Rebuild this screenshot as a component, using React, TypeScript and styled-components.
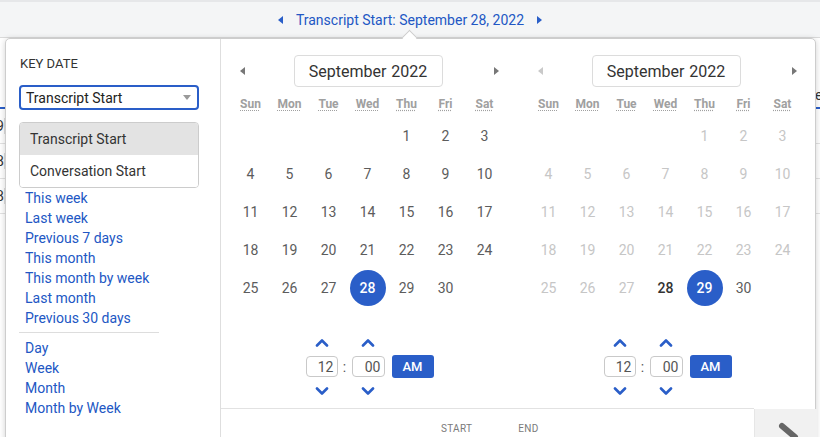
import React from "react";
import styled, { createGlobalStyle } from "styled-components";

const BLUE = "#2a5ec8";
const LINK = "#2257c4";

const Global = createGlobalStyle`
  html, body { margin: 0; padding: 0; background: #fff; }
  body { font-family: Roboto, "Liberation Sans", Arial, sans-serif; }
  * { box-sizing: border-box; }
`;

const Page = styled.div`
  position: relative;
  width: 820px;
  height: 437px;
  overflow: hidden;
  background: #fff;
`;

const TopBar = styled.div`
  height: 38px;
  background: #f4f5f6;
  border-top: 2px solid #e6e7e9;
  border-bottom: 1px solid #dadada;
  display: flex;
  align-items: center;
  justify-content: center;
  gap: 11px;
`;

const Tri = styled.span<{ $dir: "left" | "right"; $color: string }>`
  display: inline-block;
  width: 0;
  height: 0;
  border-top: 4px solid transparent;
  border-bottom: 4px solid transparent;
  ${(p) =>
    p.$dir === "left"
      ? `border-right: 5px solid ${p.$color};`
      : `border-left: 5px solid ${p.$color};`}
`;

const TopTitle = styled.span`
  font-size: 14px;
  color: ${LINK};
  padding: 0 2px;
`;

/* background page content, mostly hidden by the popup */
const Backdrop = styled.div`
  display: flex;
  flex-direction: column;
`;

const BackHead = styled.div`
  height: 71px;
  border-bottom: 2px solid ${BLUE};
  display: flex;
  justify-content: flex-end;
  align-items: flex-start;
  padding-top: 49px;
  font-size: 14px;
  color: #333;
`;

const BackHeadText = styled.span`
  width: 5px;
  overflow: hidden;
`;

const BackRow = styled.div<{ $dark?: boolean }>`
  height: 35px;
  border-bottom: 1px solid ${(p) => (p.$dark ? "#555" : "#e2e2e2")};
  display: flex;
  align-items: center;
  font-size: 14px;
  color: #333;
`;

const BackCell = styled.div`
  width: 5px;
  overflow: hidden;
  display: flex;
  justify-content: flex-end;
  white-space: nowrap;
  border-right: 1px solid #ddd;
`;

const Popup = styled.div`
  position: absolute;
  left: 5px;
  top: 38px;
  width: 811px;
  height: 430px;
  background: #fff;
  border: 1px solid #cdcdcd;
  border-radius: 5px;
  box-shadow: 0 1px 6px rgba(0, 0, 0, 0.18);
  display: flex;
`;

const Caret = styled.div`
  position: absolute;
  top: -7px;
  left: 398px;
  width: 11px;
  height: 11px;
  background: #fff;
  border-left: 1px solid #cdcdcd;
  border-top: 1px solid #cdcdcd;
  transform: rotate(45deg);
`;

const Sidebar = styled.div`
  width: 215px;
  flex: none;
  border-right: 1px solid #dedede;
  padding: 17px 0 0 13px;
  display: flex;
  flex-direction: column;
  align-items: flex-start;
`;

const Label = styled.div`
  font-size: 13px;
  line-height: 16px;
  color: #333;
  padding-left: 1px;
`;

const Select = styled.div`
  margin-top: 13px;
  width: 180px;
  height: 25px;
  border: 2px solid ${BLUE};
  border-radius: 4px;
  display: flex;
  align-items: center;
  justify-content: space-between;
  padding: 0 6px 0 5px;
  font-size: 14px;
  color: #222;
`;

const SelectCaret = styled.span`
  width: 0;
  height: 0;
  border-left: 4px solid transparent;
  border-right: 4px solid transparent;
  border-top: 5px solid #9a9a9a;
`;

const OptionList = styled.div`
  margin-top: 12px;
  width: 180px;
  border: 1px solid #cccccc;
  border-radius: 4px;
  overflow: hidden;
`;

const OptionItem = styled.div<{ $active?: boolean }>`
  height: 32px;
  line-height: 32px;
  padding-left: 10px;
  font-size: 14px;
  color: #333;
  background: ${(p) => (p.$active ? "#e3e3e3" : "#fff")};
`;

const LinkList = styled.div`
  display: flex;
  flex-direction: column;
  padding-left: 6px;
`;

const LinkItem = styled.a`
  font-size: 14px;
  line-height: 20px;
  color: ${LINK};
  text-decoration: none;
  cursor: pointer;
`;

const Divider = styled.div`
  width: 140px;
  height: 1px;
  background: #dddddd;
  margin: 4px 0 5px;
`;

const Main = styled.div`
  flex: 1;
  display: flex;
  flex-direction: column;
`;

const CalRow = styled.div`
  height: 369px;
  display: flex;
`;

const Calendar = styled.div`
  width: 298px;
  flex: none;
  display: flex;
  flex-direction: column;
`;

const CalHeader = styled.div`
  margin-top: 16px;
  display: grid;
  grid-template-columns: 42px 1fr 46px;
  align-items: center;
  justify-items: center;
`;

const MonthBox = styled.div`
  width: 149px;
  height: 32px;
  border: 1px solid #dcdcdc;
  border-radius: 4px;
  display: flex;
  align-items: center;
  justify-content: center;
  gap: 5px;
  font-size: 16px;
  color: #333;
`;

const Grid = styled.div`
  display: grid;
  grid-template-columns: repeat(7, 39px);
  padding-left: 10px;
`;

const DowRow = styled(Grid)`
  margin-top: 9px;
  margin-bottom: 5px;
`;

const Dow = styled.abbr`
  text-align: center;
  font-size: 12px;
  line-height: 16px;
  font-weight: 700;
  color: #a0a0a0;
  text-decoration: underline dotted #a0a0a0;
  text-underline-offset: 2px;
  justify-self: center;
`;

type DayState = "normal" | "disabled" | "emph" | "selected" | "empty";

const DayCell = styled.div<{ $state: DayState }>`
  height: 38px;
  display: flex;
  align-items: center;
  justify-content: center;
  font-size: 14px;
  color: ${(p) =>
    p.$state === "disabled" ? "#c6c6c6" : p.$state === "emph" ? "#333" : "#5c5c5c"};
  font-weight: ${(p) => (p.$state === "emph" ? 500 : 400)};
`;

const SelectedDay = styled.span`
  width: 36px;
  height: 36px;
  border-radius: 50%;
  background: ${BLUE};
  color: #fff;
  font-weight: 500;
  display: flex;
  align-items: center;
  justify-content: center;
`;

const TimePicker = styled.div`
  margin-top: 28px;
  display: flex;
  align-items: center;
  justify-content: center;
  padding-right: 1px;
`;

const TimeCol = styled.div`
  display: flex;
  flex-direction: column;
  align-items: center;
  gap: 7px;
`;

const Chevron = styled.button`
  width: 16px;
  height: 14px;
  padding: 0;
  border: 0;
  background: none;
  display: flex;
  align-items: center;
  justify-content: center;
  cursor: pointer;
`;

const TimeInput = styled.div<{ $w: number }>`
  width: ${(p) => p.$w}px;
  height: 21px;
  border: 1px solid #c9c9c9;
  border-radius: 4px;
  font-size: 14px;
  color: #555;
  display: flex;
  align-items: center;
  justify-content: flex-end;
  padding-right: 3px;
`;

const Colon = styled.span`
  width: 14px;
  text-align: center;
  font-size: 14px;
  color: #555;
`;

const AmButton = styled.button`
  margin-left: 7px;
  width: 42px;
  height: 23px;
  border: 0;
  border-radius: 3px;
  background: ${BLUE};
  color: #fff;
  font-family: inherit;
  font-size: 13px;
  font-weight: 500;
  padding: 0;
`;

const Footer = styled.div`
  flex: 1;
  display: flex;
`;

const Tabs = styled.div`
  flex: 1;
  border-top: 1px solid #e2e2e2;
  display: flex;
  gap: 46px;
  padding: 14px 0 0 220px;
`;

const Tab = styled.span`
  font-size: 10px;
  line-height: 12px;
  color: #7a7a7a;
  letter-spacing: 0.3px;
`;

const EditBox = styled.div`
  width: 63px;
  flex: none;
  margin-top: 1px;
  background: #f1f1f1;
  border-left: 1px solid #e6e6e6;
  padding: 12px 0 0 22px;
`;

const days: (number | null)[][] = [
  [null, null, null, null, 1, 2, 3],
  [4, 5, 6, 7, 8, 9, 10],
  [11, 12, 13, 14, 15, 16, 17],
  [18, 19, 20, 21, 22, 23, 24],
  [25, 26, 27, 28, 29, 30, null],
];

const DOW = ["Sun", "Mon", "Tue", "Wed", "Thu", "Fri", "Sat"];
const DOW_TITLE = ["Sunday", "Monday", "Tuesday", "Wednesday", "Thursday", "Friday", "Saturday"];

const ChevronIcon = ({ up }: { up?: boolean }) => (
  <svg width="14" height="9" viewBox="0 0 14 9">
    <path
      d={up ? "M2 7.5 L7 2.5 L12 7.5" : "M2 1.5 L7 6.5 L12 1.5"}
      fill="none"
      stroke={BLUE}
      strokeWidth="2.6"
      strokeLinecap="round"
      strokeLinejoin="round"
    />
  </svg>
);

function CalendarPanel({
  stateOf,
  prevDisabled,
}: {
  stateOf: (d: number) => DayState;
  prevDisabled?: boolean;
}) {
  return (
    <Calendar>
      <CalHeader>
        <Tri $dir="left" $color={prevDisabled ? "#c9c9c9" : "#777"} />
        <MonthBox>
          <span>September</span>
          <span>2022</span>
        </MonthBox>
        <Tri $dir="right" $color="#777" />
      </CalHeader>
      <DowRow>
        {DOW.map((d, i) => (
          <Dow key={d} title={DOW_TITLE[i]}>
            {d}
          </Dow>
        ))}
      </DowRow>
      <Grid>
        {days.flat().map((d, i) => {
          if (d === null) return <DayCell key={i} $state="empty" />;
          const st = stateOf(d);
          return (
            <DayCell key={i} $state={st}>
              {st === "selected" ? <SelectedDay>{d}</SelectedDay> : d}
            </DayCell>
          );
        })}
      </Grid>
      <TimePicker>
        <TimeCol>
          <Chevron aria-label="hour up">
            <ChevronIcon up />
          </Chevron>
          <TimeInput $w={32}>12</TimeInput>
          <Chevron aria-label="hour down">
            <ChevronIcon />
          </Chevron>
        </TimeCol>
        <Colon>:</Colon>
        <TimeCol>
          <Chevron aria-label="minute up">
            <ChevronIcon up />
          </Chevron>
          <TimeInput $w={33}>00</TimeInput>
          <Chevron aria-label="minute down">
            <ChevronIcon />
          </Chevron>
        </TimeCol>
        <AmButton>AM</AmButton>
      </TimePicker>
    </Calendar>
  );
}

const quickLinks = [
  "This week",
  "Last week",
  "Previous 7 days",
  "This month",
  "This month by week",
  "Last month",
  "Previous 30 days",
];
const unitLinks = ["Day", "Week", "Month", "Month by Week"];

export default function App() {
  return (
    <Page>
      <Global />
      <TopBar>
        <Tri $dir="left" $color={BLUE} />
        <TopTitle>Transcript Start: September 28, 2022</TopTitle>
        <Tri $dir="right" $color={BLUE} />
      </TopBar>

      <Backdrop>
        <BackHead>
          <BackHeadText>ed</BackHeadText>
        </BackHead>
        <BackRow>
          <BackCell>29</BackCell>
        </BackRow>
        <BackRow>
          <BackCell>18</BackCell>
        </BackRow>
        <BackRow>
          <BackCell>28</BackCell>
        </BackRow>
      </Backdrop>

      <Popup>
        <Caret />
        <Sidebar>
          <Label>KEY DATE</Label>
          <Select>
            <span>Transcript Start</span>
            <SelectCaret />
          </Select>
          <OptionList>
            <OptionItem $active>Transcript Start</OptionItem>
            <OptionItem>Conversation Start</OptionItem>
          </OptionList>
          <LinkList>
            {quickLinks.map((l) => (
              <LinkItem key={l}>{l}</LinkItem>
            ))}
          </LinkList>
          <Divider />
          <LinkList>
            {unitLinks.map((l) => (
              <LinkItem key={l}>{l}</LinkItem>
            ))}
          </LinkList>
        </Sidebar>
        <Main>
          <CalRow>
            <CalendarPanel stateOf={(d) => (d === 28 ? "selected" : "normal")} />
            <CalendarPanel
              prevDisabled
              stateOf={(d) =>
                d < 28 ? "disabled" : d === 28 ? "emph" : d === 29 ? "selected" : "normal"
              }
            />
          </CalRow>
          <Footer>
            <Tabs>
              <Tab>START</Tab>
              <Tab>END</Tab>
            </Tabs>
            <EditBox>
              <svg width="30" height="30" viewBox="0 0 30 30">
                <path
                  d="M5 5 L18 16"
                  stroke="#666"
                  strokeWidth="6"
                  strokeLinecap="round"
                  fill="none"
                />
              </svg>
            </EditBox>
          </Footer>
        </Main>
      </Popup>
    </Page>
  );
}
